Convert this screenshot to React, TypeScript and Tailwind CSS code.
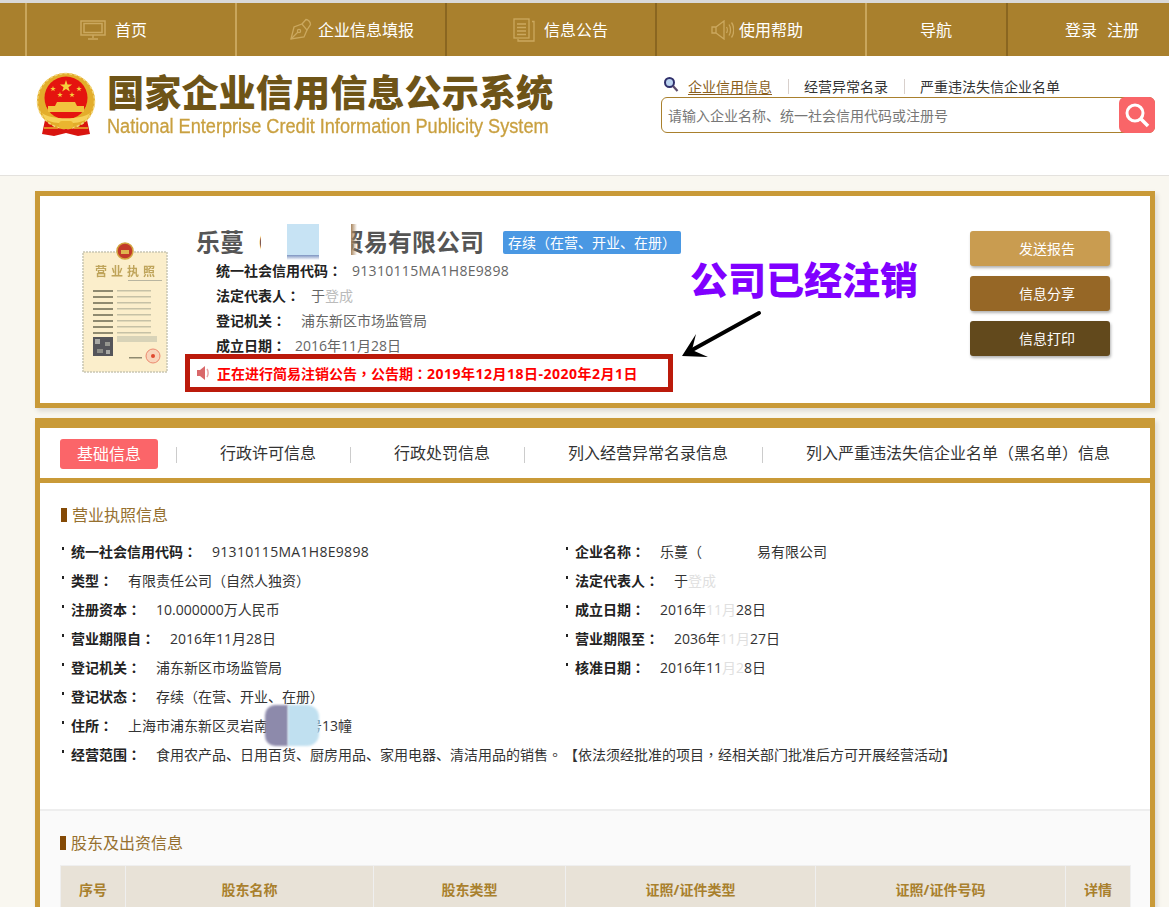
import { ReactNode } from "react";

function MonitorIcon() {
  return (
    <svg width="26" height="20" viewBox="0 0 26 20" fill="none" stroke="#cba85f" strokeWidth="1.5">
      <rect x="1" y="1" width="24" height="14" />
      <rect x="4" y="3.500" width="18" height="9" />
      <path d="M13 15v3M8 19h10" />
    </svg>
  );
}

function PenIcon() {
  return (
    <svg width="22" height="23" viewBox="0 0 22 23" fill="none" stroke="#cba85f" strokeWidth="1.3">
      <path d="M1 21 4 9l8-3 5 6-3 7z" />
      <path d="M1 21 8 14" />
      <circle cx="9" cy="13" r="1.6" />
      <path d="M12 6 16 1.500c2 0 4.500 2.500 4.500 5L17 12" />
    </svg>
  );
}

function DocIcon() {
  return (
    <svg width="22" height="24" viewBox="0 0 22 24" fill="none" stroke="#cba85f" strokeWidth="1.3">
      <rect x="1" y="1" width="15" height="19" />
      <path d="M19 3.500h2V23H5v-2" />
      <path d="M4 6h9M4 9.500h9M4 13h9M4 16.500h9" />
    </svg>
  );
}

function SpeakerIcon() {
  return (
    <svg width="23" height="20" viewBox="0 0 23 20" fill="none" stroke="#cba85f" strokeWidth="1.300">
      <path d="M1 7h4v6H1zM5 7l8-6v18l-8-6" />
      <path d="M15.500 7c1 1.500 1 4.500 0 6M18 4.500c2 3 2 8 0 11M20.500 2.500c3 4 3 11 0 15" />
    </svg>
  );
}

function Emblem() {
  return (
    <svg width="60" height="66" viewBox="0 0 60 66" className="shrink-0">
      <path d="M9 48 6 62l12 2 12-3 12 3 12-2-3-14z" fill="#d9140f" />
      <ellipse cx="30" cy="29" rx="29" ry="28" fill="#e3ad2b" />
      <ellipse cx="30" cy="29" rx="28.500" ry="27.500" fill="none" stroke="#f3d67a" strokeWidth="1.500" strokeDasharray="3 2" />
      <circle cx="30" cy="26" r="21.500" fill="#e5140f" />
      <path d="M30 8l1.500 4.400h4.600l-3.700 2.800 1.400 4.400-3.800-2.700-3.800 2.700 1.400-4.400-3.700-2.800h4.600z" fill="#f6cf3c" />
      <path d="M17 14l.7 2h2.100l-1.700 1.300.6 2-1.700-1.200-1.700 1.200.6-2-1.700-1.300h2.100zM43 14l.7 2h2.100l-1.700 1.300.6 2-1.700-1.200-1.700 1.200.6-2-1.700-1.300h2.100zM24 20l.7 2h2.100l-1.700 1.300.6 2-1.700-1.200-1.700 1.200.6-2-1.700-1.300h2.100zM36 20l.7 2h2.100l-1.700 1.300.6 2-1.700-1.200-1.700 1.200.6-2-1.700-1.300h2.100z" fill="#f6cf3c" />
      <path d="M21 30h18l2 4H19z" fill="#f2c23e" />
      <rect x="12" y="34" width="36" height="6" fill="#f2c23e" />
      <path d="M6 41c8 7 40 7 48 0l-3 6c-9 6-33 6-42 0z" fill="#f6d25a" />
      <rect x="23" y="49" width="14" height="8" rx="3" fill="#eab52f" />
      <path d="M8 56h14M38 56h14" stroke="#eab52f" strokeWidth="1.500" />
    </svg>
  );
}

function LicensePhoto() {
  return (
    <svg width="86" height="131" viewBox="0 0 86 131" className="shrink-0 blur-[0.5px]">
      <rect x="1" y="10" width="84" height="120" fill="#fbeecb" stroke="#c9c6b4" strokeWidth="1.500" strokeDasharray="2 1" />
      <circle cx="43" cy="9" r="8" fill="#c23a2a" stroke="#d2a53f" strokeWidth="1.500" />
      <rect x="39" y="8" width="8" height="4" fill="#dfb64f" />
      <text x="45" y="34" textAnchor="middle" fontSize="12" fontWeight="700" fill="#bfa45a" letterSpacing="4" fontFamily="'Noto Sans CJK SC', sans-serif">营业执照</text>
      <rect x="46" y="38" width="34" height="1" fill="#b9b5a0" />
      {[48, 54, 60, 66, 72, 78, 84, 90].map((y) => (
        <g key={y}>
          <rect x="11" y={y} width="20" height="2" fill="#8f8a70" />
          <rect x="35" y={y} width="34" height="1.500" fill="#c6c1a6" />
        </g>
      ))}
      <rect x="35" y="94" width="40" height="6" fill="#d8d3b8" />
      <rect x="11" y="95" width="20" height="19" fill="#55555a" />
      <rect x="13" y="97" width="5" height="5" fill="#a8a8a4" />
      <rect x="23" y="100" width="5" height="4" fill="#96968f" />
      <rect x="15" y="107" width="6" height="4" fill="#8c8c86" />
      <rect x="24" y="108" width="4" height="4" fill="#a8a8a4" />
      <circle cx="71" cy="114" r="7" fill="#f8d4ba" stroke="#ec8a70" strokeWidth="1" />
      <circle cx="71" cy="114" r="2" fill="#e0492f" />
      <rect x="47" y="115" width="13" height="1.500" fill="#8f8a70" />
    </svg>
  );
}

// punctuation sits in the middle of its box in the reference, the TC cut does that
function P({ children }: { children: ReactNode }) {
  return <span className="font-['Open_Sans','Noto_Sans_CJK_TC',sans-serif]">{children}</span>;
}

// same for the full-width brackets, with the KR cut
function B({ children }: { children: ReactNode }) {
  return <span className="font-['Open_Sans','Noto_Sans_CJK_KR',sans-serif]">{children}</span>;
}

function Row({ label, children, wide }: { label: string; children: ReactNode; wide?: boolean }) {
  return (
    <div className={`flex items-center h-[29px] ${wide ? "col-span-2" : ""}`}>
      <span className="ml-[1px] w-[2px] h-[3px] bg-[#222] mr-[7px] -mt-[7px]" />
      <span className="font-bold text-[#222]">
        {label}
        <P>：</P>
      </span>
      <span className="ml-[15px] text-[#333] whitespace-nowrap">{children}</span>
    </div>
  );
}

function Faded({ children }: { children: ReactNode }) {
  return <span className="text-[#e0e0e0]">{children}</span>;
}

function SectionTitle({ children }: { children: ReactNode }) {
  return (
    <div className="flex items-center gap-[5px] h-[20px] text-[16px] text-[#96702f]">
      <span className="w-[6px] h-[14px] bg-[#844a06]" />
      {children}
    </div>
  );
}

function Tab({ children }: { children: ReactNode }) {
  return (
    <div className="relative pl-[44px] pr-[34px]">
      <span className="absolute left-0 top-[6px] w-px h-[16px] bg-[#ccc]" />
      {children}
    </div>
  );
}

const navItems = [
  { label: "首页", icon: <MonitorIcon />, w: "w-[210px]", pl: "pl-[53px]", gap: "gap-[9px]", line: "border-[#c9a65c]" },
  { label: "企业信息填报", icon: <PenIcon />, w: "w-[210px]", pl: "pl-[53px]", gap: "gap-[6px]", line: "border-[#c9a65c]" },
  { label: "信息公告", icon: <DocIcon />, w: "w-[210px]", pl: "pl-[66px]", gap: "gap-[9px]", line: "border-[#8a6620]" },
  { label: "使用帮助", icon: <SpeakerIcon />, w: "w-[210px]", pl: "pl-[54px]", gap: "gap-[5px]", line: "border-[#8a6620]" },
  { label: "导航", icon: null, w: "w-[141px]", pl: "pl-[53px]", gap: "", line: "border-[#c9a65c]" },
];

export default function App() {
  return (
    <div className="h-[907px] overflow-hidden bg-[#f9f7f0] text-[14px] font-['Open_Sans','Noto_Sans_CJK_SC',sans-serif]">
      {/* top nav */}
      <div className="border-t-[3px] border-[#d9d9d9] bg-[#a9802d] h-[56px] pl-[25px] flex text-[16px] text-white">
        {navItems.map((item) => (
          <div key={item.label} className={`${item.w} ${item.pl} ${item.gap} ${item.line} border-l-2 flex items-center`}>
            {item.icon}
            <span>{item.label}</span>
          </div>
        ))}
        <div className="flex-1 border-l-2 border-[#8a6620] flex items-center pl-[57px] gap-[10px]">
          <span>登录</span>
          <span>注册</span>
        </div>
      </div>

      {/* logo + search */}
      <div className="h-[120px] bg-white border-b border-[#e4e2de] flex">
        <div className="pl-[36px] pt-[16px] flex gap-[11px]">
          <Emblem />
          <div>
            <div className="text-[37.200px] leading-[42px] font-black text-[#6e5417] whitespace-nowrap">国家企业信用信息公示系统</div>
            <div className="text-[20px] leading-[24px] text-[#c9a040] [-webkit-text-stroke:0.3px_#c9a040] origin-left scale-x-[0.907] whitespace-nowrap font-['Liberation_Sans',sans-serif]">
              National Enterprise Credit Information Publicity System
            </div>
          </div>
        </div>
        <div className="ml-auto w-[494px] mr-[14px] pt-[19px]">
          <div className="flex items-center h-[22px] text-[#333]">
            <svg width="16" height="17" viewBox="0 0 16 17" fill="none" className="ml-[2px] mr-[9px] -mt-[3px]">
              <circle cx="6.500" cy="6.500" r="4.500" fill="#bcd4f0" stroke="#2f2f6b" strokeWidth="2" />
              <path d="M10 10l4.500 5" stroke="#5a4a6b" strokeWidth="2.200" />
            </svg>
            <span className="text-[#8a5f1e] underline underline-offset-2">企业信用信息</span>
            <span className="w-px h-[15px] bg-[#d8d0cc] mx-[15.500px]" />
            <span>经营异常名录</span>
            <span className="w-px h-[15px] bg-[#d8d0cc] mx-[15.500px]" />
            <span>严重违法失信企业名单</span>
          </div>
          <div className="flex h-[36px] border border-[#a9802d] rounded-md">
            <div className="flex-1 pl-[6px] flex items-center text-[#777]">请输入企业名称、统一社会信用代码或注册号</div>
            <div className="w-[36px] -m-px bg-[#f96568] rounded-md flex items-center justify-center">
              <svg width="28" height="28" viewBox="0 0 28 28" fill="none" stroke="white">
                <circle cx="12" cy="12" r="8" strokeWidth="3" />
                <path d="M18 18l7 7" strokeWidth="3.500" />
              </svg>
            </div>
          </div>
        </div>
      </div>

      {/* company summary */}
      <div className="relative ml-[35px] mr-[14px] mt-[15px] h-[217px] border-[5px] border-[#c99a38] bg-white shadow-[2px_3px_5px_rgba(0,0,0,0.12)] flex">
        <div className="pl-[42px] pt-[46px]">
          <LicensePhoto />
        </div>
        <div className="ml-[28px] pt-[30px]">
          <div className="flex items-center h-[32px]">
            <div className="relative text-[24px] font-bold text-[#555] whitespace-nowrap flex items-center">
              <span>
                乐蔓<B>（</B>
              </span>
              <span className="inline-block w-[72px]" />
              <span>贸易有限公司</span>
              {/* blurred-out part of the name */}
              <div className="absolute left-[65px] top-0 w-[90px] h-[34px] bg-white" />
              <div className="absolute left-[91px] top-0 w-[32px] h-[33px] bg-[#c7e3f4]" />
              <div className="absolute left-[91px] top-[31px] w-[32px] h-[5px] bg-gradient-to-b from-[#7c93c0] to-white" />
              <div className="absolute left-[155px] top-0 w-[6px] h-[31px] bg-gradient-to-r from-[#a8845c] to-transparent" />
            </div>
            <span className="ml-[19px] h-[23px] px-[5px] rounded-[2px] bg-[#4a98e3] text-white flex items-center whitespace-nowrap">
              <span>存续<B>（</B>在营、开业、在册<B>）</B></span>
            </span>
          </div>
          <div className="pl-[20px] text-[#666]">
            <div className="h-[25px] flex items-center"><b className="text-[#222]">统一社会信用代码<P>：</P></b><span className="ml-[10px] tracking-[0.3px]">91310115MA1H8E9898</span></div>
            <div className="h-[25px] flex items-center"><b className="text-[#222]">法定代表人<P>：</P></b><span className="ml-[11px]">于<span className="text-[#bbb]">登成</span></span></div>
            <div className="h-[25px] flex items-center"><b className="text-[#222]">登记机关<P>：</P></b><span className="ml-[15px]">浦东新区市场监管局</span></div>
            <div className="h-[25px] flex items-center"><b className="text-[#222]">成立日期<P>：</P></b><span className="ml-[9px]">2016年11月28日</span></div>
          </div>
          <div className="-ml-[11px] -mt-[4px] w-[488px] h-[38px] border-[5px] border-[#bb1a0b] flex items-center pl-[7px] gap-[7px] text-[#f00] font-bold whitespace-nowrap">
            <svg width="13" height="16" viewBox="0 0 13 16" fill="#d9686a">
              <path d="M0 5h3l5-4v14l-5-4H0z" />
              <path d="M10 4c1.500 2 1.500 6 0 8" stroke="#e9a5a6" strokeWidth="1.500" fill="none" />
            </svg>
            <span>
              正在进行简易注销公告<P>，</P>公告期<P>：</P>
              <span className="tracking-[0.5px]">2019年12月18日-2020年2月1日</span>
            </span>
          </div>
        </div>
        <div className="ml-auto mr-[40px] pt-[35px] flex flex-col gap-[10px] text-white">
          <div className="w-[140px] h-[35px] pl-[49px] flex items-center rounded-[3px] bg-[#c99c50] shadow-[1px_2px_3px_rgba(0,0,0,0.3)]">发送报告</div>
          <div className="w-[140px] h-[35px] pl-[49px] flex items-center rounded-[3px] bg-[#966726] shadow-[1px_2px_3px_rgba(0,0,0,0.3)]">信息分享</div>
          <div className="w-[140px] h-[35px] pl-[49px] flex items-center rounded-[3px] bg-[#62491c] shadow-[1px_2px_3px_rgba(0,0,0,0.3)]">信息打印</div>
        </div>

        {/* annotation drawn on top of the screenshot */}
        <div className="absolute left-[650px] top-[55px] text-[38px] leading-[56px] font-black text-[#8000ff] whitespace-nowrap">公司已经注销</div>
        <svg className="absolute left-[640px] top-[110px]" width="90" height="60" viewBox="0 0 90 60">
          <path d="M79 7 12 44" stroke="black" strokeWidth="4" strokeLinecap="round" />
          <path d="M2 50 16 28 12 44 28 51z" fill="black" />
        </svg>
      </div>

      {/* details card */}
      <div className="ml-[35px] mr-[14px] mt-[10px] h-[500px] border-[5px] border-t-[10px] border-b-0 border-[#c99a38] bg-white shadow-[2px_3px_5px_rgba(0,0,0,0.12)]">
        <div className="h-[50px] pl-[20px] flex items-center text-[16px] text-[#333] whitespace-nowrap">
          <div className="w-[98px] shrink-0 h-[30px] mt-[1px] rounded-[3px] bg-[#fb6569] text-white flex items-center justify-center">基础信息</div>
          <div className="flex pl-[18px]">
            <Tab>行政许可信息</Tab>
            <Tab>行政处罚信息</Tab>
            <Tab>列入经营异常名录信息</Tab>
            <Tab>
              列入严重违法失信企业名单<B>（</B>黑名单<B>）</B>信息
            </Tab>
          </div>
        </div>
        <div className="h-[5px] bg-[#c99a38]" />

        <div className="h-[328px] pl-[21px] pt-[22px] border-b-2 border-[#eeeeee]">
          <SectionTitle>营业执照信息</SectionTitle>
          <div className="grid grid-cols-[504px_1fr] mt-[12px]">
            <Row label="统一社会信用代码">
              <span className="tracking-[0.3px]">91310115MA1H8E9898</span>
            </Row>
            <Row label="企业名称">
              乐蔓<B>（</B>
              <span className="inline-block w-[55px]" />易有限公司
            </Row>
            <Row label="类型">
              有限责任公司<B>（</B>自然人独资<B>）</B>
            </Row>
            <Row label="法定代表人">
              于<Faded>登成</Faded>
            </Row>
            <Row label="注册资本">10.000000万人民币</Row>
            <Row label="成立日期">
              2016年<Faded>11月</Faded>28日
            </Row>
            <Row label="营业期限自">2016年11月28日</Row>
            <Row label="营业期限至">
              2036年<Faded>11月</Faded>27日
            </Row>
            <Row label="登记机关">浦东新区市场监管局</Row>
            <Row label="核准日期">
              2016年11<Faded>月2</Faded>8日
            </Row>
            <Row label="登记状态" wide>
              存续<B>（</B>在营、开业、在册<B>）</B>
            </Row>
            <Row label="住所" wide>
              <span className="relative">
                上海市浦东新区灵岩南路<span className="inline-block w-[26px]" />号13幢
                <span className="absolute left-[137px] top-[-11px] w-[23px] h-[41px] rounded-l-[10px] bg-[#8d8aab] blur-[1px]" />
                <span className="absolute left-[160px] top-[-11px] w-[31px] h-[41px] rounded-r-[12px] bg-[#c0e0f0] blur-[1px]" />
              </span>
            </Row>
            <Row label="经营范围" wide>
              食用农产品、日用百货、厨房用品、家用电器、清洁用品的销售<P>。</P>
              <span className="ml-[9px]">【依法须经批准的项目<P>，</P>经相关部门批准后方可开展经营活动】</span>
            </Row>
          </div>
        </div>

        <div className="h-[96px] bg-[#fafafa] pl-[20px] pr-[20px] pt-[22px]">
          <SectionTitle>股东及出资信息</SectionTitle>
          <table className="mt-[12px] w-full table-fixed border-collapse">
            <thead>
              <tr className="h-[48px] bg-[#e8e2d7] font-bold text-[#a9802d]">
                <th className="w-[65px] border border-[#efefef]">序号</th>
                <th className="w-[248px] border border-[#efefef]">股东名称</th>
                <th className="w-[192px] border border-[#efefef]">股东类型</th>
                <th className="w-[250px] border border-[#efefef]">证照/证件类型</th>
                <th className="w-[250px] border border-[#efefef]">证照/证件号码</th>
                <th className="w-[65px] border border-[#efefef]">详情</th>
              </tr>
            </thead>
          </table>
        </div>
      </div>
    </div>
  );
}
